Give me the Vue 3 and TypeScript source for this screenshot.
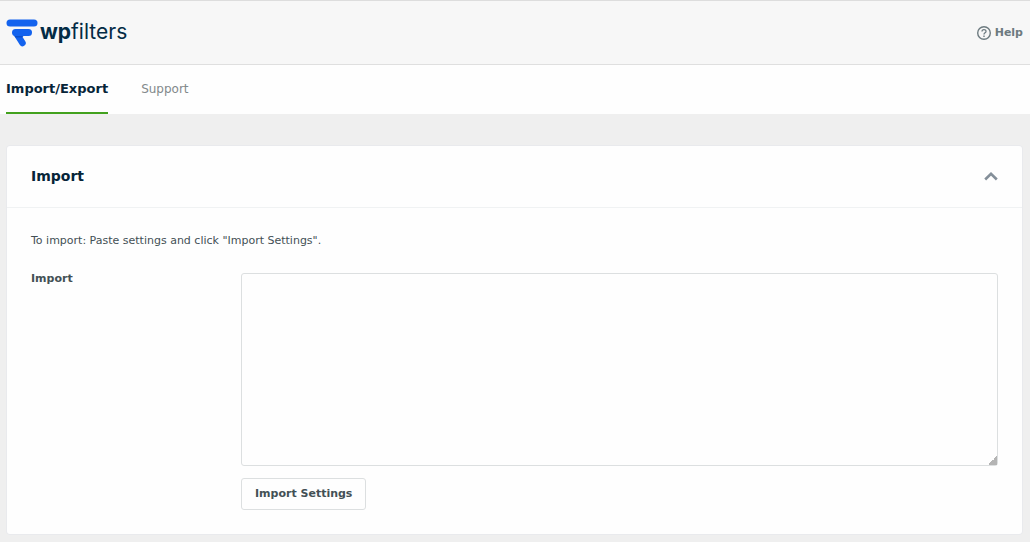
<script setup lang="ts">
import { ref } from 'vue'

const tabs = ['Import/Export', 'Support']
const activeTab = ref(tabs[0])
const open = ref(true)
const settings = ref('')
</script>

<template>
  <div class="page">
    <header class="header">
      <a class="logo" href="#" aria-label="wpfilters">
        <svg class="mark" viewBox="0 0 32 28" aria-hidden="true">
          <rect x="0.5" y="0.5" width="31" height="7" rx="3.5" fill="#1463ee" />
          <path d="M9.500 13.500H22.500" stroke="#1463ee" stroke-width="7" stroke-linecap="round" />
          <path d="M10.500 14.500 16.500 24" stroke="#1463ee" stroke-width="6.500" stroke-linecap="round" />
          <path d="M8.500 17H17.500L16 18.500H9.500Z" fill="#0d4fc9" />
        </svg>
        <span class="word"><b>wp</b>filters</span>
      </a>
      <a class="help" href="#">
        <svg viewBox="0 0 14 14" fill="none" stroke="currentColor" aria-hidden="true">
          <circle cx="7" cy="7" r="6.300" stroke-width="1.400" />
          <path d="M5 5.600C5 3 9 3 9 5.400C9 6.900 7 6.700 7 8.500" stroke-width="1.300" />
          <path d="M7 9.600V11" stroke-width="1.400" />
        </svg>
        Help
      </a>
    </header>
    <nav class="tabs">
      <a
        v-for="tab in tabs"
        :key="tab"
        href="#"
        class="tab"
        :class="{ active: tab === activeTab }"
        @click.prevent="activeTab = tab"
      >{{ tab }}</a>
    </nav>
    <main class="content">
      <section class="card">
        <div class="card-head">
          <h2>Import</h2>
          <button class="toggle" type="button" aria-label="Toggle import" :aria-expanded="open" @click="open = !open">
            <svg viewBox="0 0 14 9" fill="none" aria-hidden="true">
              <path d="M1.200 7.500 7 1.800 12.800 7.500" stroke="#848f99" stroke-width="2.600" />
            </svg>
          </button>
        </div>
        <form v-if="open" class="card-body" @submit.prevent>
          <p>To import: Paste settings and click "Import Settings".</p>
          <div class="row">
            <label for="import">Import</label>
            <div class="field">
              <textarea id="import" v-model="settings"></textarea>
              <button class="submit" type="submit">Import Settings</button>
            </div>
          </div>
        </form>
      </section>
    </main>
  </div>
</template>

<style>
body {
  background: #efefef;
}
</style>

<style scoped>
.page {
  font: 11px/16px "DejaVu Sans", sans-serif;
  color: #435055;
}
a {
  color: inherit;
  text-decoration: none;
}
.header {
  display: flex;
  align-items: center;
  justify-content: space-between;
  box-sizing: border-box;
  height: 65px;
  padding: 0 7px 0 6px;
  background: #f7f7f7;
  border-top: 1px solid #dddddd;
  border-bottom: 1px solid #dfdfdf;
}
.logo {
  display: flex;
  align-items: center;
  gap: 2px;
  color: #032b45;
}
.mark {
  width: 32px;
  height: 28px;
}
.word {
  padding-bottom: 2px;
  font: 21px/24px "Inter", sans-serif;
}
.help {
  display: flex;
  align-items: center;
  gap: 4px;
  font-weight: bold;
  color: #6d7b80;
}
.help svg {
  width: 14px;
  height: 14px;
}
.tabs {
  display: flex;
  gap: 33px;
  padding: 0 6px;
  background: #fefefe;
}
.tab {
  padding: 16px 0 15px;
  border-bottom: 2px solid transparent;
  font-size: 12px;
  color: #82898b;
}
.tab.active {
  border-color: #42a11e;
  font-size: 13px;
  font-weight: bold;
  color: #062438;
}
.content {
  padding: 32px 8px 8px 7px;
}
.card {
  background: #fefefe;
  border-radius: 3px;
  box-shadow: 0 0 0 1px #e9eaed;
}
.card-head {
  display: flex;
  align-items: center;
  justify-content: space-between;
  padding: 20px 24px 21px;
  border-bottom: 1px solid #f0f2f3;
}
h2 {
  margin: 0;
  font-size: 14px;
  line-height: 20px;
  color: #062438;
}
.toggle {
  display: flex;
  padding: 0;
  border: 0;
  background: none;
}
.toggle svg {
  width: 14px;
  height: 9px;
}
.card-body {
  padding: 25px 24px 24px;
}
p {
  margin: 0 0 22px;
}
.row {
  display: grid;
  grid-template-columns: 210px 1fr;
}
label {
  font-weight: bold;
}
.field {
  display: flex;
  flex-direction: column;
  align-items: flex-start;
  gap: 12px;
  padding-top: 2px;
}
textarea {
  box-sizing: border-box;
  width: 100%;
  height: 193px;
  padding: 8px;
  border: 1px solid #dcdfe0;
  border-radius: 3px;
  background: #fefefe;
  font: inherit;
}
textarea::-webkit-resizer {
  background: linear-gradient(135deg, transparent 50%, #b4b4b4 50%) right bottom / 9px 9px no-repeat;
}
.submit {
  height: 32px;
  padding: 0 13px;
  border: 1px solid #dcdfe0;
  border-radius: 3px;
  background: #fefefe;
  font: inherit;
  font-weight: bold;
  color: #435055;
}
</style>
